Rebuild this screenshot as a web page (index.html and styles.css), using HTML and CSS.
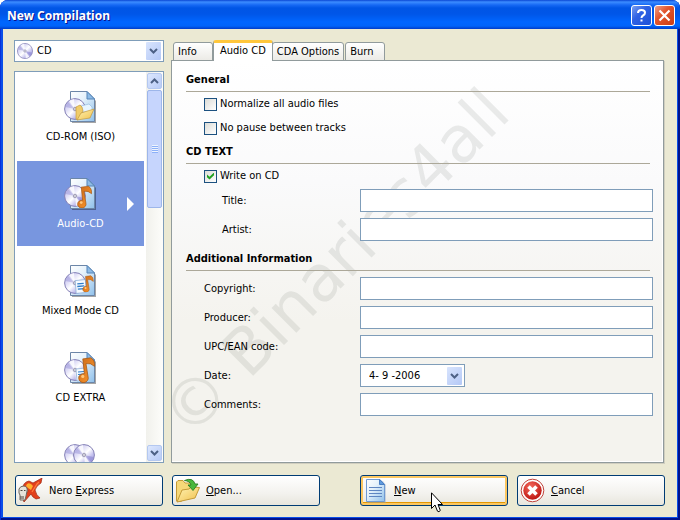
FILE: index.html
```html
<!DOCTYPE html>
<html lang="en">
<head>
    <meta charset="UTF-8">
    <meta name="viewport" content="width=device-width, initial-scale=1.0">
    <title>New Compilation</title>
    <link rel="stylesheet" href="styles.css">
</head>
<body>
    <!-- Shared icon parts -->
    <svg class="defs" width="0" height="0" aria-hidden="true">
        <defs>
            <linearGradient id="pageFill" x1="0" y1="0" x2="1" y2="1">
                <stop offset="0" stop-color="#ffffff"/>
                <stop offset="0.4" stop-color="#e4f1fb"/>
                <stop offset="1" stop-color="#8fc0ea"/>
            </linearGradient>
            <linearGradient id="discFill" x1="0" y1="0" x2="1" y2="1">
                <stop offset="0" stop-color="#b9b5e6"/>
                <stop offset="0.3" stop-color="#dcdaf6"/>
                <stop offset="0.5" stop-color="#ffffff"/>
                <stop offset="0.7" stop-color="#c3c0ee"/>
                <stop offset="1" stop-color="#a09bdc"/>
            </linearGradient>
            <linearGradient id="noteFill" x1="0" y1="0" x2="1" y2="1">
                <stop offset="0" stop-color="#c8681a"/>
                <stop offset="1" stop-color="#ff9a2c"/>
            </linearGradient>
            <linearGradient id="folderFill" x1="0" y1="0" x2="1" y2="1">
                <stop offset="0" stop-color="#fff3b4"/>
                <stop offset="1" stop-color="#f0c04c"/>
            </linearGradient>
            <radialGradient id="redFill" cx="0.4" cy="0.3" r="0.8">
                <stop offset="0" stop-color="#f4685c"/>
                <stop offset="1" stop-color="#b80c08"/>
            </radialGradient>
            <symbol id="page" viewBox="0 0 32 32">
                <path d="M8 3H26L32 10V32H8Z" fill="#000" opacity="0.35"/>
                <path d="M6.500 0.500H23L30.500 8V30.500H6.500Z" fill="url(#pageFill)" stroke="#6c86a8"/>
                <path d="M23 0.500V8H30.500Z" fill="#8dbbe6" stroke="#5584b8"/>
            </symbol>
            <symbol id="disc" viewBox="0 0 22 22">
                <circle cx="11" cy="11" r="10.400" fill="url(#discFill)" stroke="#8480b6"/>
                <path d="M11 11L5 3A10 10 0 0 1 10 1Z" fill="#fff" opacity="0.800"/>
                <path d="M11 11L17 19A10 10 0 0 1 12 21Z" fill="#fff" opacity="0.800"/>
                <path d="M11 11L1.500 9A10 10 0 0 1 4 4Z" fill="#8d87d2" opacity="0.400"/>
                <path d="M11 11L20.500 13A10 10 0 0 1 18 18Z" fill="#7770c8" opacity="0.450"/>
                <circle cx="11" cy="11" r="2.500" fill="#d4d2e6"/>
                <circle cx="11" cy="11" r="1.400" fill="#fff" stroke="#7d7b98" stroke-width="0.800"/>
            </symbol>
            <symbol id="note" viewBox="0 0 16 24">
                <path d="M6 16L4.500 2Q9 1.500 12 1Q16 3 15.500 9Q12 5.500 7.500 6.500L9.500 19A4.500 4.200 0 1 1 6 16Z" fill="url(#noteFill)" stroke="#a4540f" stroke-width="0.700"/>
                <circle cx="4.500" cy="18.500" r="1.500" fill="#ffc77c"/>
            </symbol>
            <symbol id="sheet" viewBox="0 0 12 14">
                <path d="M1 1.500L10.500 0.500L11.500 12.500L2 13.500Z" fill="#f5faff" stroke="#86abd4" stroke-width="0.700"/>
                <path d="M3 4.500L9 4M3 7L9.500 6.500M3.500 9.500L10 9" stroke="#2f7cc8" stroke-width="1.200"/>
            </symbol>
            <symbol id="chevron" viewBox="0 0 9 6">
                <path d="M1 1L4.500 4.500L8 1" fill="none" stroke="#4d6185" stroke-width="2"/>
            </symbol>
        </defs>
    </svg>

    <div class="window">
        <!-- Title bar -->
        <header class="titlebar">
            <h1>New Compilation</h1>
            <button class="caption help" aria-label="Help">
                <svg width="13" height="15" viewBox="0 0 13 15"><path d="M3 5Q3 2 6.500 2Q10 2 10 4.700Q10 6.500 8 7.500Q6.500 8.300 6.500 10" fill="none" stroke="#fff" stroke-width="2"/><path d="M5.500 11.500H7.500V13.500H5.500Z" fill="#fff"/></svg>
            </button>
            <button class="caption close" aria-label="Close">
                <svg width="13" height="13" viewBox="0 0 13 13"><path d="M1.500 1.500L11.500 11.500M11.500 1.500L1.500 11.500" stroke="#fff" stroke-width="2.200"/></svg>
            </button>
        </header>

        <div class="content">
            <div class="main">
                <!-- Compilation types -->
                <aside class="sidebar">
                    <div class="combo">
                        <svg width="16" height="16"><use href="#disc"/></svg>
                        <select aria-label="Disc type">
                            <option>CD</option>
                        </select>
                        <span class="arrow"><svg width="9" height="6"><use href="#chevron"/></svg></span>
                    </div>
                    <div class="list">
                        <ul class="types">
                            <li>
                                <svg width="34" height="34" viewBox="0 0 34 34">
                                    <use href="#page" width="32" height="32"/>
                                    <use href="#disc" x="0" y="7" width="22" height="22"/>
                                    <path d="M17 15L25 13L28 16V21H17Z" fill="#e8f5ff" stroke="#8bb5dc" stroke-width="0.600"/>
                                    <path d="M12 16L16 14L18 16L19 20L14 29L12 28Z" fill="#f0cc6a" stroke="#c49a3c" stroke-width="0.700"/>
                                    <path d="M13 29L17 22L30 18L26 27Z" fill="url(#folderFill)" stroke="#c49a3c" stroke-width="0.700"/>
                                </svg>
                                <span>CD-ROM (ISO)</span>
                            </li>
                            <li class="selected">
                                <svg width="34" height="34" viewBox="0 0 34 34">
                                    <use href="#page" width="32" height="32"/>
                                    <use href="#disc" x="0" y="7" width="22" height="22"/>
                                    <use href="#note" x="13" y="7" width="15" height="23"/>
                                </svg>
                                <span>Audio-CD</span>
                                <svg class="pointer" width="7" height="14" viewBox="0 0 7 14"><path d="M0 0L7 7L0 14Z" fill="#fff"/></svg>
                            </li>
                            <li>
                                <svg width="34" height="34" viewBox="0 0 34 34">
                                    <use href="#page" width="32" height="32"/>
                                    <use href="#disc" x="0" y="7" width="22" height="22"/>
                                    <use href="#sheet" x="10" y="14" width="13" height="15"/>
                                    <use href="#note" x="18" y="10" width="12" height="17"/>
                                </svg>
                                <span>Mixed Mode CD</span>
                            </li>
                            <li>
                                <svg width="34" height="34" viewBox="0 0 34 34">
                                    <use href="#page" width="32" height="32"/>
                                    <use href="#disc" x="0" y="7" width="22" height="22"/>
                                    <use href="#sheet" x="11" y="15" width="12" height="15"/>
                                    <use href="#note" x="14" y="4" width="17" height="27"/>
                                </svg>
                                <span>CD EXTRA</span>
                            </li>
                            <li>
                                <svg width="34" height="34" viewBox="0 0 34 34">
                                    <use href="#disc" x="0" y="5" width="22" height="22"/>
                                    <use href="#disc" x="9" y="5" width="22" height="22"/>
                                </svg>
                            </li>
                        </ul>
                        <div class="scrollbar">
                            <span class="step up"><svg width="9" height="6"><use href="#chevron"/></svg></span>
                            <span class="thumb"></span>
                            <span class="step down"><svg width="9" height="6"><use href="#chevron"/></svg></span>
                        </div>
                    </div>
                </aside>

                <!-- Tabs and form -->
                <section class="options">
                    <nav class="tabs">
                        <button>Info</button>
                        <button class="active">Audio CD</button>
                        <button>CDA Options</button>
                        <button>Burn</button>
                    </nav>
                    <form class="panel">
                        <div class="watermark">© Binaries4all</div>

                        <h2>General</h2>
                        <label class="check"><input type="checkbox">Normalize all audio files</label>
                        <label class="check"><input type="checkbox">No pause between tracks</label>

                        <h2>CD TEXT</h2>
                        <label class="check"><input type="checkbox" checked>Write on CD</label>
                        <div class="fields nested">
                            <label for="title">Title:</label>
                            <input type="text" id="title">
                            <label for="artist">Artist:</label>
                            <input type="text" id="artist">
                        </div>

                        <h2>Additional Information</h2>
                        <div class="fields">
                            <label for="copyright">Copyright:</label>
                            <input type="text" id="copyright">
                            <label for="producer">Producer:</label>
                            <input type="text" id="producer">
                            <label for="upc">UPC/EAN code:</label>
                            <input type="text" id="upc">
                            <label for="date">Date:</label>
                            <div class="combo date">
                                <input type="text" id="date" value="4- 9 -2006">
                                <button type="button" class="arrow" aria-label="Pick a date"><svg width="9" height="6"><use href="#chevron"/></svg></button>
                            </div>
                            <label for="comments">Comments:</label>
                            <input type="text" id="comments">
                        </div>
                    </form>
                </section>
            </div>

            <!-- Bottom buttons -->
            <footer class="actions">
                <button>
                    <svg width="26" height="26" viewBox="0 0 26 26">
                        <path d="M4 12Q5 4 11 3L15 5L24 0L23 5Q18 8 17 12Q18 17 22 20L18 21Q14 19 13 16L6 24L5 21L10 13L8 9Z" fill="#e2401c" stroke="#9c2410" stroke-width="0.700"/>
                        <path d="M8 8Q9 4 13 6L15 8L13 12L10 10Z" fill="#ffb02c"/>
                        <path d="M14 14L19 6L21 4" fill="none" stroke="#ff7a3c" stroke-width="1.200"/>
                        <path d="M1 11Q2 8 6 8Q10 9 9 13L8 18L7 22H2V17L1 15Z" fill="#e6e3da" stroke="#6c675e"/>
                        <path d="M2.500 12.500H4.500M6 12.500H7.500M3 18V21M5 18V21" stroke="#4b453e"/>
                    </svg>
                    <span>Nero <u>E</u>xpress</span>
                </button>
                <button>
                    <svg width="26" height="26" viewBox="0 0 26 26">
                        <path d="M1.500 23V4L3 2.500H8L10 5H18.500V12L6 23.500H2Z" fill="#f6d878" stroke="#c49a38"/>
                        <path d="M2 24L7 12L14 11L16 9L24.500 9.500L20 20Z" fill="url(#folderFill)" stroke="#c49a38"/>
                        <path d="M9.500 2.500Q18 -1 20 6H23L18 12.500L13 7H16Q15 3 9.500 2.500Z" fill="#4ab83c" stroke="#2a7e22" stroke-width="0.900"/>
                    </svg>
                    <span><u>O</u>pen...</span>
                </button>
                <button class="default">
                    <svg width="26" height="26" viewBox="0 0 26 26">
                        <path d="M4 3H20L23 7V25H4Z" fill="#8fa6c4" opacity="0.400"/>
                        <path d="M3.500 1.500H17L21.500 6.500V23.500H3.500Z" fill="url(#pageFill)" stroke="#6f9ad2"/>
                        <path d="M16.500 1.500V6.500H21.500Z" fill="#5f9ade" stroke="#4a7fc4"/>
                        <path d="M6 9.500H19M6 12.500H19M6 15.500H19M6 18.500H19" stroke="#5f86c2"/>
                    </svg>
                    <span><u>N</u>ew</span>
                </button>
                <button>
                    <svg width="26" height="26" viewBox="0 0 26 26">
                        <circle cx="12.500" cy="12.500" r="11.300" fill="#fff" stroke="#c04038"/>
                        <circle cx="12.500" cy="12.500" r="9.200" fill="url(#redFill)"/>
                        <path d="M8.500 8.500L16.500 16.500M16.500 8.500L8.500 16.500" stroke="#fff" stroke-width="3.600"/>
                    </svg>
                    <span><u>C</u>ancel</span>
                </button>
            </footer>
        </div>

        <!-- Mouse cursor -->
        <svg class="cursor" width="12" height="21" viewBox="0 0 12 21"><path d="M0.500 0.800V16.500L4 13L6.500 19.200Q8 20.500 9.300 18.500L7 12.500H11.500Z" fill="#fff" stroke="#000"/></svg>
    </div>
</body>
</html>
```
FILE: styles.css
```css
/* General Styles */
* {
    box-sizing: border-box;
}

body {
    margin: 0;
    background: #fff;
    color: #000;
    font-family: 'DejaVu Sans Condensed', 'DejaVu Sans', sans-serif;
    font-size: 11px;
    line-height: 14px;
}

button,
input,
select {
    font: inherit;
    color: inherit;
    margin: 0;
}

svg {
    display: block;
    flex: none;
}

.defs {
    position: absolute;
}

/* Window frame */
.window {
    position: relative;
    display: flex;
    flex-direction: column;
    height: 100vh;
    min-height: 500px;
    border-radius: 8px 8px 0 0;
    overflow: hidden;
    background: #0a4ee8;
    box-shadow: inset 1px 0 #0831d9, inset -2px -2px #00138c;
    padding: 0 3px 3px;
}

.titlebar {
    display: flex;
    align-items: center;
    gap: 2px;
    flex: none;
    height: 29px;
    margin: 0 -3px;
    padding: 2px 5px 0 7px;
    background: linear-gradient(#0a46d4 0, #3c8cff 2px, #1668f4 5px, #0055e5 8px, #0056e8 14px, #0066ff 22px, #0064fa 26px, #003cc8 29px);
}

.titlebar h1 {
    flex: 1;
    margin: 0;
    color: #fff;
    font: bold 12px/18px 'Noto Sans', sans-serif;
    text-shadow: 1px 1px #0f1089;
}

.caption {
    display: flex;
    align-items: center;
    justify-content: center;
    width: 21px;
    height: 21px;
    padding: 0;
    border: 1px solid #fff;
    border-radius: 3px;
}

.help {
    background: linear-gradient(135deg, #7c9ff0, #2f62e4 40%, #1c50d8);
}

.close {
    background: linear-gradient(135deg, #f0a088, #e2552e 40%, #cc3c12);
}

.content {
    flex: 1;
    display: flex;
    flex-direction: column;
    gap: 12px;
    min-height: 0;
    padding: 11px 12px;
    background: #ebe9d3;
}

.main {
    flex: 1;
    display: flex;
    gap: 7px;
    min-height: 0;
    padding-right: 1px;
}

/* Sidebar */
.sidebar {
    flex: 0 0 150px;
    display: flex;
    flex-direction: column;
    gap: 9px;
    margin-left: -1px;
}

.combo {
    display: flex;
    align-items: center;
    flex: none;
    position: relative;
    height: 22px;
    padding: 0 2px;
    border: 1px solid #7f9db9;
    background: #fff;
}

.combo select,
.combo input {
    flex: 1;
    min-width: 0;
    height: 20px;
    border: 0;
    padding: 0 4px;
    background: none;
    appearance: none;
    outline: none;
}

.arrow {
    display: flex;
    align-items: center;
    justify-content: center;
    width: 15px;
    height: 18px;
    padding: 0;
    border: 0;
    border-radius: 1px;
    background: linear-gradient(135deg, #d8e4fd, #b4c8f6);
    pointer-events: none;
}

.list {
    flex: 1;
    display: flex;
    min-height: 0;
    border: 1px solid #7f9db9;
    background: #fff;
    overflow: hidden;
}

.types {
    flex: 1;
    margin: 0;
    padding: 2px;
    list-style: none;
    overflow: hidden;
}

.types li {
    position: relative;
    display: flex;
    flex-direction: column;
    align-items: center;
    gap: 5px;
    height: 85px;
    margin-bottom: 2px;
    padding-top: 17px;
}

.types .selected {
    background: #7896df;
    color: #fff;
}

.pointer {
    position: absolute;
    right: 10px;
    top: 36px;
}

/* Scrollbar */
.scrollbar {
    flex: none;
    display: flex;
    flex-direction: column;
    width: 17px;
    padding: 1px;
    background: linear-gradient(90deg, #f1f1ec, #fdfdfa);
}

.step {
    display: flex;
    align-items: center;
    justify-content: center;
    height: 16px;
    border: 1px solid #b4c8f0;
    border-radius: 2px;
    background: linear-gradient(135deg, #dce7fe, #b8cbf6);
}

.up svg {
    transform: rotate(180deg);
}

.down {
    margin-top: auto;
}

.thumb {
    height: 118px;
    margin-top: 1px;
    border: 1px solid #9db6ea;
    border-radius: 2px;
    background:
        repeating-linear-gradient(#eef4fe 0 1px, #8cb0f8 1px 2px) center / 6px 8px no-repeat,
        #c6d5fd;
}

/* Tabs */
.options {
    flex: 1;
    display: flex;
    flex-direction: column;
    min-width: 0;
}

.tabs {
    display: flex;
    align-items: flex-end;
    height: 21px;
    margin-bottom: -1px;
    padding-left: 2px;
}

.tabs button {
    height: 19px;
    margin-right: 1px;
    padding: 0 4px;
    min-width: 40px;
    border: 1px solid #919b9c;
    border-radius: 3px 3px 0 0;
    background: linear-gradient(#fff, #ecebe6);
    text-align: left;
}

.tabs .active {
    z-index: 1;
    height: 21px;
    margin: 0 -1px;
    padding: 0 6px 2px;
    border-top: 3px solid #ffc73c;
    border-bottom: 0;
    background: #fff;
}

/* Form panel */
.panel {
    flex: 1;
    position: relative;
    padding: 12px 10px 0 14px;
    border: 1px solid #919b9c;
    background: linear-gradient(#fff, #fafafb 30%, #f4f3ee 65%);
    box-shadow: inset -1px -1px #fff, 1px 1px #d0cebf;
}

.panel h2 {
    position: relative;
    margin: 5px 3px 0 0;
    padding-bottom: 4px;
    border-bottom: 1px solid #aca899;
    font-size: 11px;
    line-height: 14px;
}

.panel h2:first-of-type {
    margin-top: 0;
}

.check {
    position: relative;
    display: flex;
    align-items: center;
    gap: 3px;
    height: 24px;
    margin-left: 18px;
}

.check input {
    appearance: none;
    width: 13px;
    height: 13px;
    border: 1px solid #1c5180;
    background: linear-gradient(135deg, #dcdcd7, #fff);
}

.check input:checked::before {
    content: '';
    display: block;
    width: 7px;
    height: 7px;
    margin: 2px;
    background: #21a121;
    clip-path: polygon(0 29%, 36% 62%, 100% 0, 100% 40%, 36% 100%, 0 68%);
}

.fields {
    position: relative;
    display: grid;
    grid-template-columns: 174px 1fr;
    align-items: center;
    gap: 6px 0;
    padding: 6px 0;
}

.nested {
    padding-top: 1px;
}

.fields label {
    padding-left: 18px;
}

.nested label {
    padding-left: 36px;
}

.fields > input {
    width: 100%;
    height: 23px;
    padding: 0 4px;
    border: 1px solid #7f9db9;
    background: #fff;
}

.date {
    width: 105px;
    height: 23px;
}

.date input {
    padding-left: 6px;
}

.watermark {
    position: absolute;
    left: 17px;
    top: 325px;
    color: rgba(60, 70, 60, 0.1);
    font: 64px/64px 'DejaVu Sans', sans-serif;
    white-space: nowrap;
    transform: rotate(-45deg);
    transform-origin: 0 54px;
}

/* Bottom buttons */
.actions {
    display: flex;
    gap: 9px;
}

.actions button {
    display: flex;
    align-items: center;
    gap: 5px;
    width: 148px;
    height: 31px;
    padding: 0 2px;
    border: 1px solid #003c74;
    border-radius: 3px;
    background: linear-gradient(#fff, #f3f2ee 60%, #e8e6dd);
}

.actions .default {
    margin-left: auto;
    box-shadow: inset 0 0 0 2px #fbc761, inset 0 -3px #e59700;
}

.cursor {
    position: absolute;
    left: 431px;
    top: 492px;
}
```
